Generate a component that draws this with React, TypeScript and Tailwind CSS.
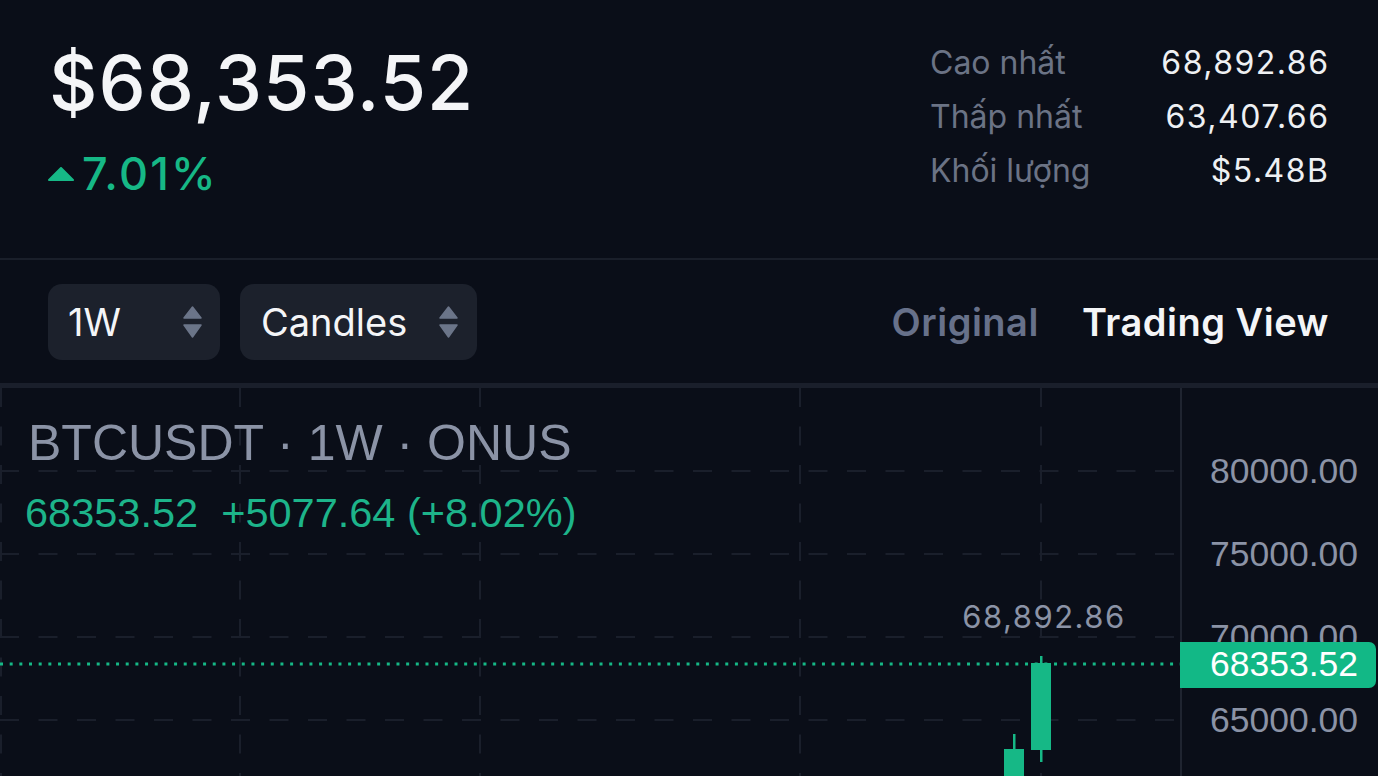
import React from "react";

function UpDown() {
  return (
    <svg width="19" height="32" viewBox="0 0 19 32" fill="#6b7589" stroke="#6b7589" strokeWidth="1.5" strokeLinejoin="round">
      <polygon points="9.5,1 18,12 1,12" />
      <polygon points="1,19 18,19 9.5,31" />
    </svg>
  );
}

const hLines = [83, 166, 249, 332];
const vLines = [1, 240, 480, 800, 1041];
const axis = [
  { t: "80000.00", top: 66 },
  { t: "75000.00", top: 149 },
  { t: "70000.00", top: 232 },
  { t: "65000.00", top: 315 },
];

export default function App() {
  return (
    <div className="w-[1378px] h-[776px] overflow-hidden bg-[#0a0e18] flex flex-col font-['Inter',sans-serif]">
      {/* Top */}
      <div className="h-[258px] flex justify-between pl-[48px] pr-[50px]">
        <div className="flex flex-col pt-[45px]">
          <div className="text-[75px] leading-none font-medium tracking-[1px] text-[#f4f5f7] ml-[1px]">$68,353.52</div>
          <div className="mt-[31px] flex items-center gap-[8px]">
            <svg width="26" height="14" viewBox="0 0 26 14">
              <polygon points="13,1 25,13 1,13" fill="#16b886" stroke="#16b886" strokeWidth="2" strokeLinejoin="round" />
            </svg>
            <span className="text-[45px] leading-none font-medium tracking-[2.2px] text-[#16b886]">7.01%</span>
          </div>
        </div>
        <div className="w-[398px] pt-[36px] flex flex-col text-[32px]">
          <div className="h-[54px] flex items-center justify-between">
            <span className="text-[#6b7385]">Cao nhất</span>
            <span className="text-[#eef0f3] tracking-[1.5px] mr-[-1.5px]">68,892.86</span>
          </div>
          <div className="h-[54px] flex items-center justify-between">
            <span className="text-[#6b7385]">Thấp nhất</span>
            <span className="text-[#eef0f3] tracking-[1.5px] mr-[-1.5px]">63,407.66</span>
          </div>
          <div className="h-[54px] flex items-center justify-between">
            <span className="text-[#6b7385]">Khối lượng</span>
            <span className="text-[#eef0f3] tracking-[1.5px] mr-[-1.5px]">$5.48B</span>
          </div>
        </div>
      </div>
      <div className="h-[2px] bg-[#1a1f2a]" />

      {/* Controls */}
      <div className="h-[123px] flex items-center justify-between pl-[48px] pr-[49px]">
        <div className="flex gap-[20px]">
          <div className="h-[76px] w-[172px] rounded-[14px] bg-[#1c212c] flex items-center justify-between pl-[20px] pr-[18px]">
            <span className="text-[38px] text-[#f4f5f7] leading-none">1W</span>
            <UpDown />
          </div>
          <div className="h-[76px] w-[237px] rounded-[14px] bg-[#1c212c] flex items-center justify-between pl-[21px] pr-[19px]">
            <span className="text-[38px] text-[#f4f5f7] leading-none">Candles</span>
            <UpDown />
          </div>
        </div>
        <div className="flex gap-[43px] text-[38px] font-semibold leading-none tracking-[0.5px]">
          <span className="text-[#67718a]">Original</span>
          <span className="text-[#f4f5f7]">Trading View</span>
        </div>
      </div>
      <div className="h-[5px] bg-[#1a1f2b]" />

      {/* Chart */}
      <div className="flex-1 flex font-['Liberation_Sans',Arial,sans-serif]">
        <div className="relative flex-1">
          <svg className="absolute inset-0" width="1180" height="388" viewBox="0 0 1180 388">
            {hLines.map((y) => (
              <line key={y} x1="0" y1={y} x2="1180" y2={y} stroke="#1a1f2b" strokeWidth="2" strokeDasharray="19 19.5" />
            ))}
            {vLines.map((x) => (
              <line key={x} x1={x} y1="0" x2={x} y2="388" stroke="#1a1f2b" strokeWidth="2" strokeDasharray="19 19.5" />
            ))}
            <line x1="0" y1="276" x2="1180" y2="276" stroke="#16b886" strokeWidth="3" strokeDasharray="3 6.67" />
            <rect x="1040" y="268" width="2.5" height="106" fill="#16b886" />
            <rect x="1031" y="275" width="20" height="87" fill="#16b886" />
            <rect x="1013" y="346" width="2.5" height="20" fill="#16b886" />
            <rect x="1004" y="361" width="20" height="30" fill="#16b886" />
          </svg>
          <div className="absolute left-[28px] top-[30px] text-[50px] leading-none text-[#8b93a6] whitespace-nowrap">
            BTCUSDT · 1W · ONUS
          </div>
          <div className="absolute left-[25px] top-[104px] text-[41.5px] leading-none text-[#1db48a] whitespace-pre">
            68353.52  +5077.64 (+8.02%)
          </div>
          <div className="absolute left-[1044px] -translate-x-1/2 top-[213px] text-[31px] leading-none tracking-[1.5px] text-[#8b93a6] font-['Inter',sans-serif] whitespace-nowrap">
            68,892.86
          </div>
        </div>
        <div className="relative w-[198px] border-l-2 border-[#1f2430]">
          {axis.map((a) => (
            <div key={a.t} className="absolute left-[28px] text-[35.5px] leading-none text-[#8b93a6]" style={{ top: a.top }}>
              {a.t}
            </div>
          ))}
          <div className="absolute left-[-2px] top-[254px] h-[46px] w-[196px] rounded-r-[7px] bg-[#12b886] flex items-center pl-[30px]">
            <span className="text-[35.5px] leading-none text-white">68353.52</span>
          </div>
        </div>
      </div>
    </div>
  );
}
